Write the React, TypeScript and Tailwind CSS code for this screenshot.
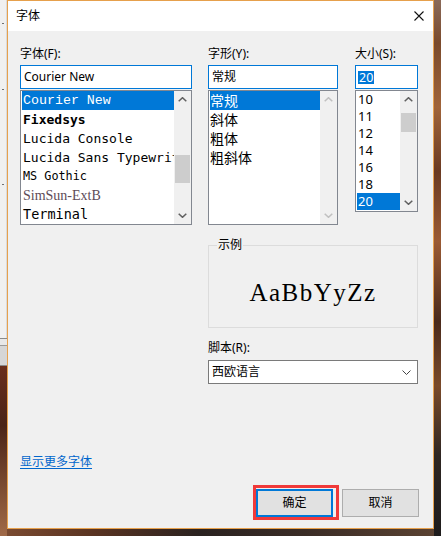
import React from 'react';

const courier = "font-['Courier_New','Nimbus_Mono_PS','FreeMono','Liberation_Mono',monospace]";

const fonts = [
  { name: 'Courier New', cls: `${courier} text-[13.3px]`, selected: true },
  { name: 'Fixedsys', cls: "font-['DejaVu_Sans_Mono',monospace] text-[13px] font-bold text-black" },
  { name: 'Lucida Console', cls: "font-['DejaVu_Sans_Mono',monospace] text-[13px] text-black" },
  { name: 'Lucida Sans Typewriter', cls: "font-['DejaVu_Sans_Mono',monospace] text-[13px] text-black" },
  { name: 'MS Gothic', cls: "font-['DejaVu_Sans_Mono',monospace] text-[11.8px] text-black" },
  { name: 'SimSun-ExtB', cls: "font-['Liberation_Serif',serif] text-[14px] text-[#5e4c58]" },
  { name: 'Terminal', cls: "font-['DejaVu_Sans_Mono',monospace] text-[13.5px] text-black" },
];

const styles = ['常规', '斜体', '粗体', '粗斜体'];
const sizes = ['10', '11', '12', '14', '16', '18', '20'];

const Chevron = ({ down, color }: { down?: boolean; color: string }) => (
  <svg width="9" height="5" viewBox="0 0 9 5">
    <path
      d={down ? 'M0.7 0.7 L4.5 4.3 L8.3 0.7' : 'M0.7 4.3 L4.5 0.7 L8.3 4.3'}
      fill="none"
      stroke={color}
      strokeWidth="1.5"
    />
  </svg>
);

// thumb: classes for margin/height of the grey thumb, or null when disabled
const ScrollBar = ({ thumb }: { thumb: string | null }) => {
  const arrow = thumb ? '#606060' : '#c0c0c0';
  return (
    <div className="w-[17px] h-full bg-[#f0f0f0] flex flex-col shrink-0">
      <div className="h-[17px] flex items-center justify-center">
        <Chevron color={arrow} />
      </div>
      <div className="flex-1">
        {thumb && <div className={`mx-auto w-[15px] bg-[#cdcdcd] ${thumb}`} />}
      </div>
      <div className="h-[17px] flex items-center justify-center">
        <Chevron down color={arrow} />
      </div>
    </div>
  );
};

const Label = ({ children }: { children: React.ReactNode }) => (
  <div className="h-[16px] leading-[16px] text-[12px] text-black">{children}</div>
);

const App = () => {
  return (
    <div className="w-[441px] h-[536px] overflow-hidden flex bg-[linear-gradient(90deg,#8a5a3c_0%,#5c3a28_30%,#2c221e_60%,#4a3428_100%)] font-['Noto_Sans','Noto_Sans_CJK_SC',sans-serif]">
      {/* window behind, on the left edge */}
      <div className="w-[7px] shrink-0 flex flex-col">
        <div className="h-[338px] bg-[#f0f0f0] border-r border-[#dadada] relative">
          <div className="absolute left-[2px] top-[23px] w-[2px] h-[1px] bg-[#707070]" />
          <div className="absolute left-[2px] top-[89px] w-[2px] h-[1px] bg-[#707070]" />
          <div className="absolute left-[2px] top-[184px] w-[2px] h-[1px] bg-[#707070]" />
        </div>
        <div className="h-[1px] bg-[#8a8a8a]" />
        <div className="h-[6px] bg-[#e8e8e8]" />
        <div className="h-[1px] bg-[#9a9a9a]" />
        <div className="h-[19px] bg-[#d6d6d6]" />
        <div className="h-[1px] bg-[#8a8a8a]" />
        <div className="flex-1 bg-[linear-gradient(180deg,#6a2e1c_0%,#4a2418_35%,#7a4a30_70%,#a06a48_100%)]" />
      </div>

      <div className="flex flex-col shrink-0">
        <div className="w-[427px] h-[529px] border border-[#e6a04c] bg-[#f0f0f0] flex flex-col">
          {/* title bar */}
          <div className="h-[30px] bg-white flex items-center justify-between pl-[8px] pr-[9px]">
            <span className="text-[12px] leading-[16px] text-black">字体</span>
            <svg width="10" height="10" viewBox="0 0 10 10">
              <path d="M0.5 0.5 L9.5 9.5 M9.5 0.5 L0.5 9.5" stroke="#111" strokeWidth="1.1" />
            </svg>
          </div>

          <div className="flex-1 pl-[12px] pr-[14px] pt-[15px] flex flex-col">
            <div className="flex items-start">
              {/* font column */}
              <div className="w-[172px] flex flex-col">
                <Label>字体(F):</Label>
                <div className="mt-[3px] h-[24px] border border-[#0078d7] bg-white px-[3px] flex items-center text-[12px] text-black">
                  Courier New
                </div>
                <div className="mt-[1px] h-[135px] border border-[#828790] bg-white flex">
                  <div className="flex-1 min-w-0 pl-[1px] overflow-hidden">
                    {fonts.map((f) => (
                      <div
                        key={f.name}
                        className={`h-[19px] leading-[19px] pl-[1px] whitespace-nowrap overflow-hidden ${f.cls} ${
                          f.selected ? 'bg-[#0078d7] text-white' : ''
                        }`}
                      >
                        {f.name}
                      </div>
                    ))}
                  </div>
                  <ScrollBar thumb="mt-[47px] h-[28px]" />
                </div>
              </div>

              {/* style column */}
              <div className="ml-[16px] w-[130px] flex flex-col">
                <Label>字形(Y):</Label>
                <div className="mt-[3px] h-[24px] border border-[#0078d7] bg-white px-[3px] flex items-center text-[12px] text-black">
                  常规
                </div>
                <div className="mt-[1px] h-[135px] border border-[#828790] bg-white flex">
                  <div className="flex-1 min-w-0 pl-[1px]">
                    {styles.map((s, i) => (
                      <div
                        key={s}
                        className={`h-[19px] leading-[19px] text-[14px] font-['Noto_Sans_CJK_SC',sans-serif] ${
                          i === 0 ? 'bg-[#0078d7] text-white' : 'text-black'
                        }`}
                      >
                        {s}
                      </div>
                    ))}
                  </div>
                  <ScrollBar thumb={null} />
                </div>
              </div>

              {/* size column */}
              <div className="ml-[17px] w-[63px] flex flex-col">
                <Label>大小(S):</Label>
                <div className="mt-[3px] h-[24px] border border-[#0078d7] bg-white px-[2px] flex items-center">
                  <span className="bg-[#0078d7] text-white text-[12.5px] leading-[13px] px-[1px]">20</span>
                </div>
                <div className="mt-[1px] h-[122px] border border-[#828790] bg-white flex">
                  <div className="flex-1 min-w-0 pl-[1px]">
                    {sizes.map((s) => (
                      <div
                        key={s}
                        className={`h-[17px] leading-[17px] text-[13px] pl-[1px] ${
                          s === '20' ? 'bg-[#0078d7] text-white' : 'text-black'
                        }`}
                      >
                        {s}
                      </div>
                    ))}
                  </div>
                  <ScrollBar thumb="mt-[5px] h-[19px]" />
                </div>
              </div>
            </div>

            {/* sample + script */}
            <div className="ml-[188px] w-[210px] flex flex-col">
              <div className="mt-[20px] h-[83px] border border-[#dcdcdc] relative flex justify-center pt-[32px]">
                <span className="absolute left-[8px] top-[-9px] px-[1px] bg-[#f0f0f0] text-[12px] leading-[16px] text-black">
                  示例
                </span>
                <span className="font-['Liberation_Serif',serif] text-[25px] leading-[30px] tracking-[1.5px] text-black">
                  AaBbYyZz
                </span>
              </div>
              <div className="mt-[12px]">
                <Label>脚本(R):</Label>
              </div>
              <div className="mt-[4px] h-[24px] border border-[#7a7a7a] bg-white pl-[3px] pr-[6px] flex items-center justify-between text-[12px] text-black">
                <span>西欧语言</span>
                <svg width="9" height="5" viewBox="0 0 9 5">
                  <path d="M0.5 0.5 L4.5 4.5 L8.5 0.5" fill="none" stroke="#444" strokeWidth="1" />
                </svg>
              </div>
            </div>

            <div className="mt-[70px] h-[16px] leading-[16px] text-[12px]">
              <span className="text-[#0066cc] underline underline-offset-2">显示更多字体</span>
            </div>

            <div className="mt-[15px] flex justify-end items-start">
              <div className="border-[3px] border-[#f03a3a] pt-[1px] pr-[3px]">
                <div className="w-[77px] h-[28px] border-2 border-[#0078d7] bg-[#e1e1e1] flex items-center justify-center text-[12px] text-black">
                  确定
                </div>
              </div>
              <div className="ml-[3px] mt-[4px] w-[77px] h-[28px] border border-[#adadad] bg-[#e1e1e1] flex items-center justify-center text-[12px] text-black">
                取消
              </div>
            </div>
          </div>
        </div>
        <div className="flex-1 bg-[linear-gradient(90deg,#7a4a30_0%,#5a3422_20%,#2a2220_45%,#3a2c26_70%,#5a4232_100%)]" />
      </div>

      {/* desktop picture at the right edge */}
      <div className="w-[7px] shrink-0 bg-[linear-gradient(180deg,#8a6a5a_0%,#7a4a2c_8%,#a0643a_20%,#6a3a22_32%,#9a5a34_45%,#4a2a1c_60%,#7a4a2a_72%,#2e2622_85%,#1e1c1c_100%)]" />
    </div>
  );
};

export default App;
